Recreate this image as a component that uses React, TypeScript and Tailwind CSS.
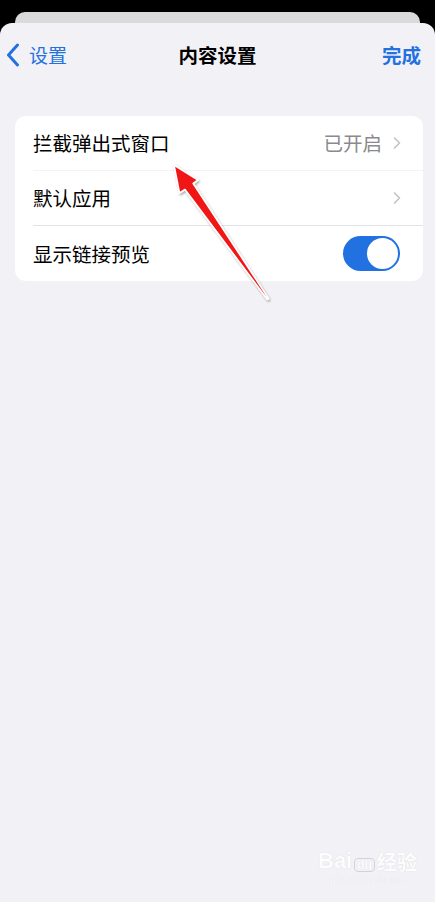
import { ChevronRight } from 'lucide-react';

const font = { fontFamily: '"Noto Sans CJK SC", "Noto Sans", sans-serif' };

function Row({ label, value, line, children }: { label: string; value?: string; line?: string; children?: React.ReactNode }) {
  return (
    <div className="flex h-[55px] items-stretch pl-[18px]">
      <div className={`flex flex-1 items-center justify-between ${line ?? ''}`}>
        <span className="text-[19.5px] text-black">{label}</span>
        {children ?? (
          <div className="flex items-center gap-[5px] pr-[16px]">
            {value && <span className="text-[19.5px] text-[#8a8a8e]">{value}</span>}
            <ChevronRight className="h-[20px] w-[20px] text-[#c4c4c7]" strokeWidth={2} />
          </div>
        )}
      </div>
    </div>
  );
}

function Toggle() {
  return (
    <div className="mr-[23px] flex h-[35px] w-[57px] items-center justify-end rounded-full bg-[#2271e0] p-[2px]">
      <div className="h-[31px] w-[31px] rounded-full bg-white" />
    </div>
  );
}

function BackChevron() {
  return (
    <svg width="14" height="24" viewBox="0 0 14 24" className="text-[#2371df]">
      <path d="M11.5 2 L2.5 12 L11.5 22" fill="none" stroke="currentColor" strokeWidth="3" strokeLinecap="round" strokeLinejoin="round" />
    </svg>
  );
}

function Arrow() {
  return (
    <svg className="pointer-events-none absolute left-0 top-0" width="435" height="902" viewBox="0 0 435 902">
      <defs>
        <filter id="sh" x="-20%" y="-20%" width="140%" height="140%">
          <feDropShadow dx="1" dy="1.5" stdDeviation="1.2" floodColor="#000" floodOpacity="0.35" />
        </filter>
      </defs>
      <polygon
        points="174,165 198,180 193.2,183.5 268.6,298.6 267.4,299.4 185,189.5 179.5,193"
        fill="#f01818"
        stroke="#ffffff"
        strokeWidth="1.6"
        strokeLinejoin="round"
        filter="url(#sh)"
      />
    </svg>
  );
}

function Watermark() {
  return (
    <div className="pointer-events-none absolute left-[318px] top-[850px] flex flex-col items-center opacity-90">
      <div className="flex items-end gap-[2px] text-[22px] font-bold leading-none text-white [text-shadow:0_0_1px_#c8c8cc]">
        <span style={{ fontFamily: '"Liberation Sans", sans-serif' }}>Bai</span>
        <span className="rounded-[4px] border border-[#d0d0d4] px-[2px] text-[12px]" style={{ fontFamily: '"Liberation Sans", sans-serif' }}>du</span>
        <span className="text-[20px]">经验</span>
      </div>
      <span className="mt-[3px] text-[10px] leading-none text-white [text-shadow:0_0_1px_#c8c8cc]" style={{ fontFamily: '"Liberation Serif", serif' }}>
        jingyan.baidu.com
      </span>
    </div>
  );
}

export default function App() {
  return (
    <div className="relative flex h-[902px] w-[435px] flex-col overflow-hidden bg-black" style={font}>
      <div className="ml-[15px] mr-[15px] mt-[12px] h-[11px] rounded-t-[10px] bg-[#dadadd]" />
      <div className="flex flex-1 flex-col rounded-t-[12px] bg-[#f2f2f6]">
        <div className="relative flex h-[64px] items-center justify-between pl-[6px] pr-[14px]">
          <div className="flex items-center gap-[9px] text-[#2371df]">
            <BackChevron />
            <span className="text-[19px]">设置</span>
          </div>
          <span className="absolute left-1/2 -translate-x-1/2 text-[19.5px] font-bold text-black">内容设置</span>
          <span className="text-[19.5px] font-bold text-[#2371df]">完成</span>
        </div>
        <div className="ml-[15px] mr-[12px] mt-[29px] overflow-hidden rounded-[11px] bg-white">
          <Row label="拦截弹出式窗口" value="已开启" line="border-b border-[#f3f3f5]" />
          <Row label="默认应用" line="border-b border-[#e3e3e7]" />
          <Row label="显示链接预览">
            <Toggle />
          </Row>
        </div>
      </div>
      <Arrow />
      <Watermark />
    </div>
  );
}
